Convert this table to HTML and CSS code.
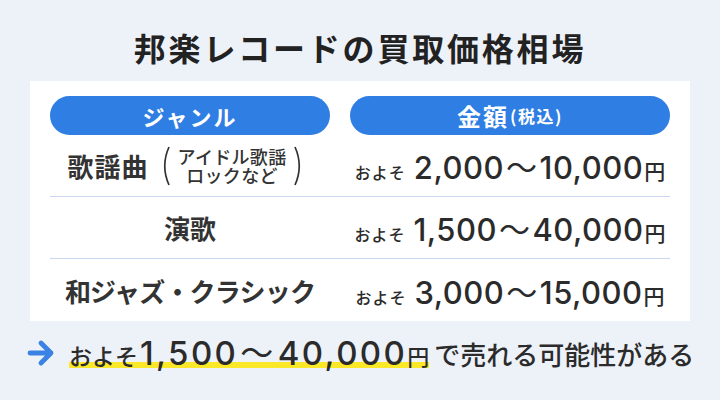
FILE: index.html
```html
<!DOCTYPE html>
<html lang="ja">
<head>
<meta charset="utf-8">
<link rel="stylesheet" href="styles.css">
</head>
<body>
<h1 class="title">邦楽レコードの買取価格相場</h1>
<div class="panel">
  <div class="row head">
    <div class="pill">ジャンル</div>
    <div class="pill"><span class="pill-main">金額</span><span class="pill-sub">(税込)</span></div>
  </div>
  <div class="row">
    <div class="genre">
      <span class="genre-main">歌謡曲</span>
      <svg class="paren" width="10" height="40" viewBox="0 0 10 40"><path d="M9 1 Q0.5 20 9 39" fill="none" stroke="#333" stroke-width="1.7"/></svg>
      <span class="genre-sub">アイドル歌謡<br>ロックなど</span>
      <svg class="paren" width="10" height="40" viewBox="0 0 10 40"><path d="M1 1 Q9.5 20 1 39" fill="none" stroke="#333" stroke-width="1.7"/></svg>
    </div>
    <div class="price"><span class="approx">およそ</span><span class="num">2,000<span class="tilde">～</span>10,000</span><span class="yen">円</span></div>
  </div>
  <div class="row">
    <div class="genre">演歌</div>
    <div class="price"><span class="approx">およそ</span><span class="num">1,500<span class="tilde">～</span>40,000</span><span class="yen">円</span></div>
  </div>
  <div class="row last">
    <div class="genre genre-long">和ジャズ・クラシック</div>
    <div class="price"><span class="approx">およそ</span><span class="num">3,000<span class="tilde">～</span>15,000</span><span class="yen">円</span></div>
  </div>
</div>
<div class="summary">
  <svg class="arrow" width="28" height="28" viewBox="0 0 28 28"><path d="M3 14 H24 M14 4 L24 14 L14 24" fill="none" stroke="#3a82e4" stroke-width="4.8" stroke-linecap="round" stroke-linejoin="round"/></svg>
  <p class="summary-text"><span class="mark"><span class="s-approx">およそ</span><span class="s-num">1,500<span class="tilde">～</span>40,000</span><span class="s-yen">円</span></span><span class="s-rest">で売れる可能性がある</span></p>
</div>
</body>
</html>
```
FILE: styles.css
```css
* { box-sizing: border-box; }
html, body { margin: 0; padding: 0; }
body {
  width: 720px;
  height: 400px;
  background: #edf1f8;
  font-family: "Noto Sans CJK JP", "Noto Sans", sans-serif;
  color: #2b2b2b;
  overflow: hidden;
}
.title {
  margin: 0;
  padding-top: 23px;
  height: 81px;
  line-height: 48px;
  font-size: 32px;
  font-weight: 700;
  letter-spacing: 2.8px;
  text-align: center;
  color: #222;
}
.panel {
  margin: 0 30px;
  background: #fff;
  padding: 15px 20px 0;
  height: 240px;
}
.row {
  display: grid;
  grid-template-columns: 280px 320px;
  column-gap: 20px;
  height: 62px;
  border-bottom: 1px solid #c9d8f0;
  align-items: center;
}
.row.head { height: 39px; border-bottom: none; }
.row.last { border-bottom: none; }
.pill {
  height: 39px;
  border-radius: 20px;
  background: #2f7ee3;
  color: #fff;
  display: flex;
  align-items: center;
  justify-content: center;
  font-size: 22px;
  font-weight: 700;
  letter-spacing: 2px;
}
.pill-main { font-size: 24px; letter-spacing: 2px; }
.pill-sub { font-size: 17px; letter-spacing: 1.5px; margin-left: 1px; }
.genre {
  display: flex;
  align-items: center;
  justify-content: center;
  font-size: 26px;
  font-weight: 700;
  color: #333;
}
.genre-long { letter-spacing: -0.8px; }
.genre-main { letter-spacing: 1px; margin-right: 3px; }
.paren { display: block; margin: 0 8px; }
.genre-sub {
  font-size: 18px;
  line-height: 19px;
  text-align: center;
  font-weight: 500;
  letter-spacing: 0.3px;
}
.price {
  display: flex;
  align-items: baseline;
  justify-content: center;
  color: #2b2b2b;
}
.approx { font-size: 16px; font-weight: 500; margin-right: 8px; letter-spacing: 1px; }
.num {
  font-family: Inter, "Noto Sans CJK JP", sans-serif;
  font-size: 31px;
  font-weight: 500;
  letter-spacing: 0.5px;
}
.tilde {
  font-family: "Noto Sans CJK JP", sans-serif;
  font-weight: 400;
  margin: 0 2px;
}
.yen { font-size: 21px; font-weight: 500; margin-left: 1px; }
.summary {
  display: flex;
  align-items: center;
  padding: 14px 0 0 27px;
}
.arrow { display: block; margin-right: 14px; }
.summary-text {
  margin: 0;
  display: flex;
  align-items: baseline;
  color: #2b2b2b;
  font-weight: 500;
  line-height: 1;
}
.mark {
  display: flex;
  align-items: baseline;
  padding-bottom: 1px;
  background: linear-gradient(#fbe829, #fbe829) no-repeat left 0 bottom 3px / 100% 6px;
}
.s-approx { font-size: 23px; margin-right: 2px; }
.s-num {
  font-family: Inter, "Noto Sans CJK JP", sans-serif;
  font-size: 33px;
  letter-spacing: 2.4px;
}
.s-yen { font-size: 22px; }
.s-rest { font-size: 26px; margin-left: 5px; }
```
